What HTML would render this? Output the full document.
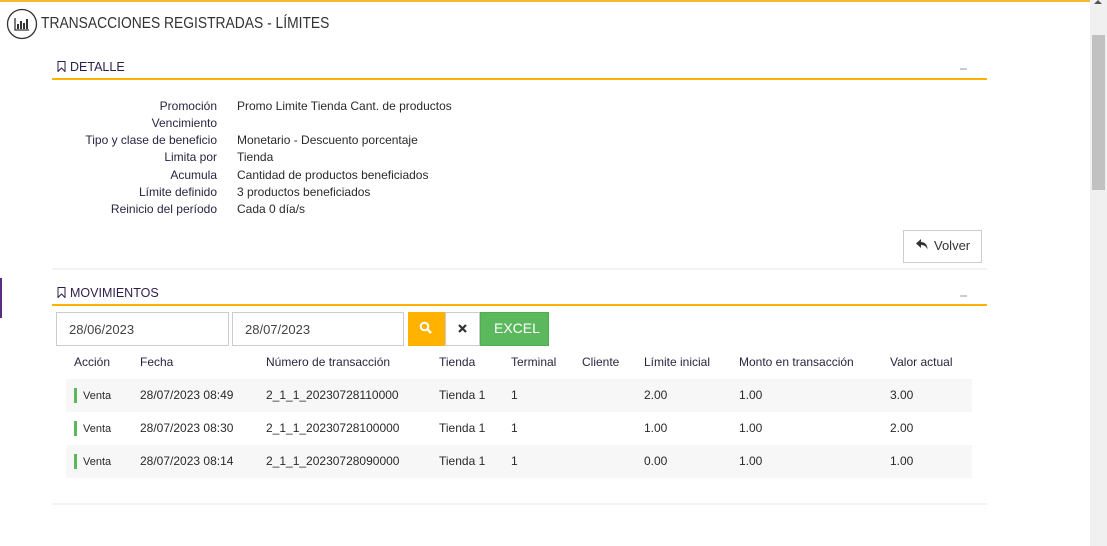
<!DOCTYPE html>
<html><head><meta charset="utf-8"><style>
*{margin:0;padding:0;box-sizing:border-box}
body{width:1107px;height:546px;overflow:hidden;background:#fff;font-family:"Liberation Sans",sans-serif;color:#333;position:relative;font-size:12px}
.a{position:absolute;white-space:nowrap}
.lbl{color:#2a2440;text-align:right;width:200px;left:17px}
.val{left:237px;color:#2a2a2a}
.th{color:#2a2440;font-size:12px;top:355px}
.td{font-size:12px;color:#2a2a2a}
</style></head><body>
<div class="a" style="left:0;top:0;width:1090px;height:2px;background:#f5b82e"></div>
<div class="a" style="left:1090px;top:0;width:17px;height:546px;background:#f0f0f0"></div>
<div class="a" style="left:1092px;top:35px;width:13px;height:155px;background:#c1c1c1"></div>
<div class="a" style="left:1094px;top:0;width:0;height:0;border-left:4px solid transparent;border-right:4px solid transparent;border-bottom:4px solid #555"></div>
<div class="a" style="left:0;top:278px;width:2px;height:40px;background:#5a2d82"></div>
<svg class="a" style="left:6px;top:8px" width="32" height="32" viewBox="0 0 32 32"><circle cx="16" cy="16" r="14.5" fill="none" stroke="#333" stroke-width="1.3"/><path d="M9 10v12h14" fill="none" stroke="#333" stroke-width="1.3"/><rect x="11" y="16" width="2" height="5" fill="#333"/><rect x="14" y="13" width="2" height="8" fill="#333"/><rect x="17" y="15" width="2" height="6" fill="#333"/><rect x="20" y="11" width="2" height="10" fill="#333"/></svg>
<div class="a" style="left:41px;top:15px;font-size:16px;color:#333;transform:scaleX(0.865);transform-origin:left">TRANSACCIONES REGISTRADAS - LÍMITES</div>
<svg class="a" style="left:57px;top:61px" width="9" height="11" viewBox="0 0 9 11"><path d="M1 .5h7v10L4.5 7 1 10.5z" fill="#fff" stroke="#2a1f4a"/></svg>
<div class="a" style="left:70px;top:60px;font-size:12.5px;color:#2a1f4a">DETALLE</div>
<div class="a" style="left:960px;top:68px;width:7px;height:2px;background:#ccc"></div>
<div class="a" style="left:52px;top:78px;width:935px;height:2px;background:#ffb300"></div>
<div class="a lbl" style="top:99px">Promoción</div><div class="a val" style="top:99px">Promo Limite Tienda Cant. de productos</div>
<div class="a lbl" style="top:116px">Vencimiento</div>
<div class="a lbl" style="top:133px">Tipo y clase de beneficio</div><div class="a val" style="top:133px">Monetario - Descuento porcentaje</div>
<div class="a lbl" style="top:150px">Limita por</div><div class="a val" style="top:150px">Tienda</div>
<div class="a lbl" style="top:168px">Acumula</div><div class="a val" style="top:168px">Cantidad de productos beneficiados</div>
<div class="a lbl" style="top:185px">Límite definido</div><div class="a val" style="top:185px">3 productos beneficiados</div>
<div class="a lbl" style="top:202px">Reinicio del período</div><div class="a val" style="top:202px">Cada 0 día/s</div>
<div class="a" style="left:903px;top:230px;width:79px;height:33px;border:1px solid #ccc;font-size:13px;color:#333;padding:7px 0 0 30px">Volver</div>
<svg class="a" style="left:915px;top:238px" width="14" height="13" viewBox="0 0 14 13"><path d="M6 1L1 5.5 6 10V7c3 0 5 1 6.5 4.5C12.5 6.5 10 4.2 6 4z" fill="#333"/></svg>
<div class="a" style="left:52px;top:268px;width:935px;height:2px;background:#f3f3f3"></div>
<svg class="a" style="left:57px;top:287px" width="9" height="11" viewBox="0 0 9 11"><path d="M1 .5h7v10L4.5 7 1 10.5z" fill="#fff" stroke="#2a1f4a"/></svg>
<div class="a" style="left:70px;top:286px;font-size:12.5px;color:#2a1f4a">MOVIMIENTOS</div>
<div class="a" style="left:960px;top:295px;width:7px;height:2px;background:#ccc"></div>
<div class="a" style="left:52px;top:304px;width:935px;height:2px;background:#ffb300"></div>
<div class="a" style="left:56px;top:312px;width:173px;height:34px;border:1px solid #ccc;padding:9px 0 0 12px;font-size:13px;color:#444">28/06/2023</div>
<div class="a" style="left:232px;top:312px;width:172px;height:34px;border:1px solid #ccc;padding:9px 0 0 12px;font-size:13px;color:#444">28/07/2023</div>
<div class="a" style="left:408px;top:312px;width:37px;height:34px;background:#ffb300"></div>
<svg class="a" style="left:419px;top:321px" width="14" height="14" viewBox="0 0 14 14"><circle cx="5.5" cy="5.5" r="3.8" fill="none" stroke="#fff" stroke-width="2"/><path d="M8.5 8.5l3.5 3.5" stroke="#fff" stroke-width="2.4"/></svg>
<div class="a" style="left:445px;top:312px;width:35px;height:34px;border:1px solid #ccc;background:#fff"></div>
<svg class="a" style="left:458px;top:324px" width="9" height="9" viewBox="0 0 9 9"><path d="M1 1l7 7M8 1L1 8" stroke="#333" stroke-width="2.2"/></svg>
<div class="a" style="left:480px;top:312px;width:69px;height:34px;background:#5cb85c;border:1px solid #4cae4c;color:#fff;font-size:14px;padding:7px 0 0 13px">EXCEL</div>
<div class="a th" style="left:74px">Acción</div><div class="a th" style="left:140px">Fecha</div><div class="a th" style="left:266px">Número de transacción</div><div class="a th" style="left:439px">Tienda</div><div class="a th" style="left:511px">Terminal</div><div class="a th" style="left:582px">Cliente</div><div class="a th" style="left:644px">Límite inicial</div><div class="a th" style="left:739px">Monto en transacción</div><div class="a th" style="left:890px">Valor actual</div>
<div class="a" style="left:66px;top:379px;width:906px;height:33px;background:#f7f7f7"></div>
<div class="a" style="left:66px;top:445px;width:906px;height:33px;background:#f7f7f7"></div>
<div class="a" style="left:74px;top:388px;width:3px;height:15px;background:#5cb85c"></div>
<div class="a" style="left:74px;top:421px;width:3px;height:15px;background:#5cb85c"></div>
<div class="a" style="left:74px;top:454px;width:3px;height:15px;background:#5cb85c"></div>
<div class="a td" style="left:83px;top:390px;font-size:11px">Venta</div><div class="a td" style="left:140px;top:388px">28/07/2023 08:49</div><div class="a td" style="left:266px;top:388px">2_1_1_20230728110000</div><div class="a td" style="left:439px;top:388px">Tienda 1</div><div class="a td" style="left:511px;top:388px">1</div><div class="a td" style="left:644px;top:388px">2.00</div><div class="a td" style="left:739px;top:388px">1.00</div><div class="a td" style="left:890px;top:388px">3.00</div>
<div class="a td" style="left:83px;top:423px;font-size:11px">Venta</div><div class="a td" style="left:140px;top:421px">28/07/2023 08:30</div><div class="a td" style="left:266px;top:421px">2_1_1_20230728100000</div><div class="a td" style="left:439px;top:421px">Tienda 1</div><div class="a td" style="left:511px;top:421px">1</div><div class="a td" style="left:644px;top:421px">1.00</div><div class="a td" style="left:739px;top:421px">1.00</div><div class="a td" style="left:890px;top:421px">2.00</div>
<div class="a td" style="left:83px;top:456px;font-size:11px">Venta</div><div class="a td" style="left:140px;top:454px">28/07/2023 08:14</div><div class="a td" style="left:266px;top:454px">2_1_1_20230728090000</div><div class="a td" style="left:439px;top:454px">Tienda 1</div><div class="a td" style="left:511px;top:454px">1</div><div class="a td" style="left:644px;top:454px">0.00</div><div class="a td" style="left:739px;top:454px">1.00</div><div class="a td" style="left:890px;top:454px">1.00</div>
<div class="a" style="left:52px;top:503px;width:935px;height:2px;background:#f3f3f3"></div>
</body></html>
